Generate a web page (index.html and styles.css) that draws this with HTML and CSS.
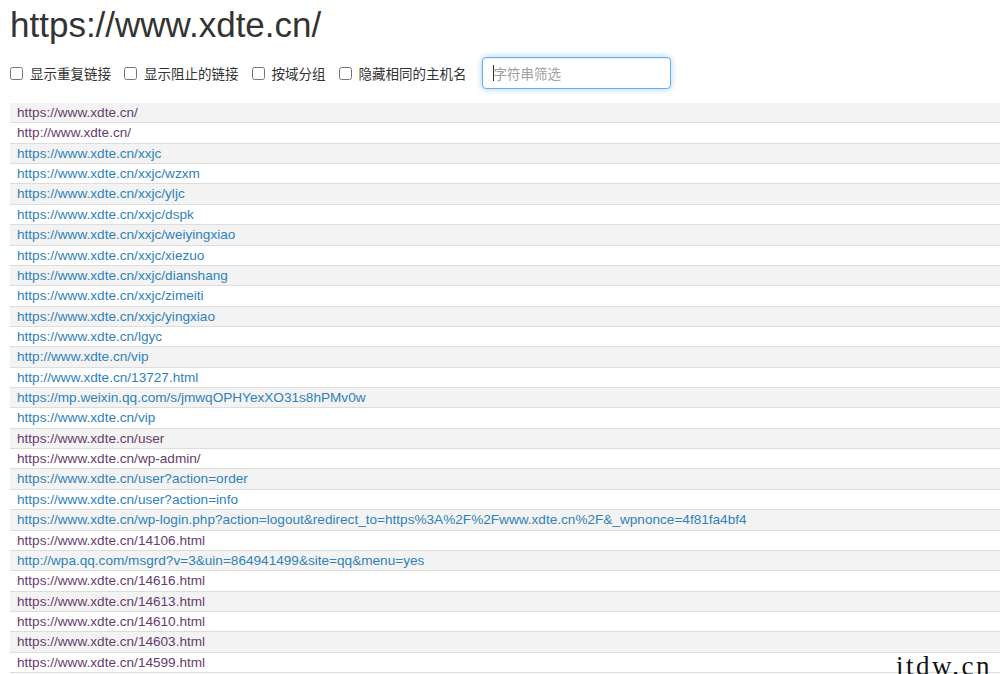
FILE: index.html
```html
<!DOCTYPE html>
<html lang="zh">
<head>
<meta charset="utf-8">
<title>links</title>
<link rel="stylesheet" href="styles.css">
</head>
<body>
<h1 class="title">https://www.xdte.cn/</h1>
<div class="controls">
  <label class="opt"><input type="checkbox" class="cb"><span>显示重复链接</span></label>
  <label class="opt"><input type="checkbox" class="cb"><span>显示阻止的链接</span></label>
  <label class="opt"><input type="checkbox" class="cb"><span>按域分组</span></label>
  <label class="opt"><input type="checkbox" class="cb"><span>隐藏相同的主机名</span></label>
  <div class="filter"><span class="caret"></span><input type="text" class="filter-input" placeholder="字符串筛选"></div>
</div>
<div class="list">
  <div class="row"><a class="link visited" href="#">https://www.xdte.cn/</a></div>
  <div class="row"><a class="link visited" href="#">http://www.xdte.cn/</a></div>
  <div class="row"><a class="link" href="#">https://www.xdte.cn/xxjc</a></div>
  <div class="row"><a class="link" href="#">https://www.xdte.cn/xxjc/wzxm</a></div>
  <div class="row"><a class="link" href="#">https://www.xdte.cn/xxjc/yljc</a></div>
  <div class="row"><a class="link" href="#">https://www.xdte.cn/xxjc/dspk</a></div>
  <div class="row"><a class="link" href="#">https://www.xdte.cn/xxjc/weiyingxiao</a></div>
  <div class="row"><a class="link" href="#">https://www.xdte.cn/xxjc/xiezuo</a></div>
  <div class="row"><a class="link" href="#">https://www.xdte.cn/xxjc/dianshang</a></div>
  <div class="row"><a class="link" href="#">https://www.xdte.cn/xxjc/zimeiti</a></div>
  <div class="row"><a class="link" href="#">https://www.xdte.cn/xxjc/yingxiao</a></div>
  <div class="row"><a class="link" href="#">https://www.xdte.cn/lgyc</a></div>
  <div class="row"><a class="link" href="#">http://www.xdte.cn/vip</a></div>
  <div class="row"><a class="link" href="#">http://www.xdte.cn/13727.html</a></div>
  <div class="row"><a class="link" href="#">https://mp.weixin.qq.com/s/jmwqOPHYexXO31s8hPMv0w</a></div>
  <div class="row"><a class="link" href="#">https://www.xdte.cn/vip</a></div>
  <div class="row"><a class="link visited" href="#">https://www.xdte.cn/user</a></div>
  <div class="row"><a class="link visited" href="#">https://www.xdte.cn/wp-admin/</a></div>
  <div class="row"><a class="link" href="#">https://www.xdte.cn/user?action=order</a></div>
  <div class="row"><a class="link" href="#">https://www.xdte.cn/user?action=info</a></div>
  <div class="row"><a class="link" href="#">https://www.xdte.cn/wp-login.php?action=logout&amp;redirect_to=https%3A%2F%2Fwww.xdte.cn%2F&amp;_wpnonce=4f81fa4bf4</a></div>
  <div class="row"><a class="link visited" href="#">https://www.xdte.cn/14106.html</a></div>
  <div class="row"><a class="link" href="#">http://wpa.qq.com/msgrd?v=3&amp;uin=864941499&amp;site=qq&amp;menu=yes</a></div>
  <div class="row"><a class="link visited" href="#">https://www.xdte.cn/14616.html</a></div>
  <div class="row"><a class="link visited" href="#">https://www.xdte.cn/14613.html</a></div>
  <div class="row"><a class="link visited" href="#">https://www.xdte.cn/14610.html</a></div>
  <div class="row"><a class="link visited" href="#">https://www.xdte.cn/14603.html</a></div>
  <div class="row"><a class="link visited" href="#">https://www.xdte.cn/14599.html</a></div>
</div>
<div class="watermark">itdw.cn</div>
</body>
</html>
```

FILE: styles.css
```css
html, body {
  margin: 0;
  padding: 0;
  background: #fff;
  overflow: hidden;
}
body {
  padding-left: 10px;
  font-family: "Liberation Sans", Arial, "Noto Sans CJK SC", sans-serif;
  color: #333;
  position: relative;
  height: 674px;
}
.title {
  margin: 5px 0 0;
  font-size: 35px;
  line-height: 40px;
  font-weight: normal;
  color: #333;
}
.controls {
  display: flex;
  align-items: center;
  margin-top: 12px;
  height: 32px;
}
.opt {
  display: flex;
  align-items: center;
  margin-right: 13px;
  font-family: "Noto Sans CJK SC", sans-serif;
  font-size: 13.5px;
  color: #333;
  line-height: 20px;
}
.opt:nth-child(4) {
  margin-right: 15px;
}
.cb {
  width: 13px;
  height: 13px;
  margin: 0 7px 0 0;
}
.filter {
  position: relative;
  width: 189px;
  height: 32px;
}
.filter-input {
  box-sizing: border-box;
  width: 189px;
  height: 32px;
  padding: 0 11px;
  border: 1px solid #66afe9;
  border-radius: 4px;
  outline: none;
  box-shadow: inset 0 1px 1px rgba(0,0,0,.075), 0 0 6px rgba(102,175,233,.6);
  font-family: "Noto Sans CJK SC", sans-serif;
  font-size: 13.5px;
  color: #555;
}
.filter-input::placeholder {
  color: #a0a0a0;
}
.caret {
  position: absolute;
  left: 11px;
  top: 8px;
  width: 1px;
  height: 16px;
  background: #333;
}
.list {
  margin-top: 14px;
}
.row {
  box-sizing: border-box;
  height: 20.37px;
  padding-top: 1px;
  line-height: 18.37px;
  border-bottom: 1px solid #dddddd;
  padding-left: 7px;
  white-space: nowrap;
  font-size: 13.6px;
}
.row:nth-child(odd) {
  background: #f3f3f3;
}
.link {
  color: #2f82ba;
  text-decoration: none;
}
.link.visited {
  color: #683c6e;
}
.watermark {
  position: absolute;
  left: 896px;
  top: 653px;
  font-family: "Liberation Serif", serif;
  font-size: 27px;
  line-height: 27px;
  letter-spacing: 2.5px;
  color: #111;
  white-space: nowrap;
}
```
